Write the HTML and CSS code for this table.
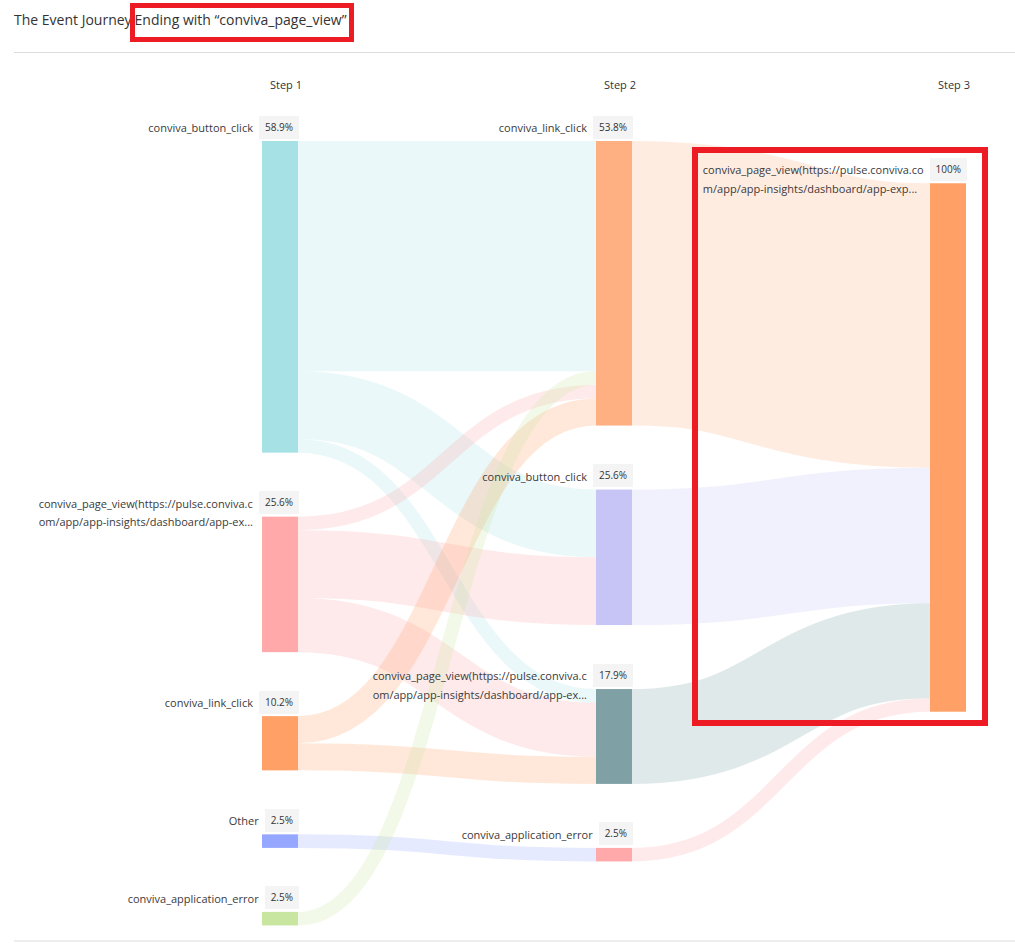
FILE: index.html
```html
<!DOCTYPE html>
<html lang="en">
<head>
<meta charset="utf-8">
<title>The Event Journey</title>
<link rel="stylesheet" href="styles.css">
</head>
<body>
<div class="header">
  <span class="title">The Event Journey</span><span class="title hl">Ending with “conviva_page_view”</span>
</div>
<div class="chart">
  <svg class="canvas" width="1015" height="887" viewBox="0 53 1015 887" xmlns="http://www.w3.org/2000/svg">
    <g class="links" fill="none">
      <path class="lk cyan" d="M298,256.18 C447,256.18 447,256.18 596,256.18" stroke-width="230.35"/>
      <path class="lk cyan" d="M298,405.23 C447,405.23 447,523.43 596,523.43" stroke-width="67.75"/>
      <path class="lk cyan" d="M298,445.88 C447,445.88 447,695.83 596,695.83" stroke-width="13.55"/>
      <path class="lk pink" d="M298,523.43 C447,523.43 447,391.68 596,391.68" stroke-width="13.55"/>
      <path class="lk pink" d="M298,564.08 C447,564.08 447,591.18 596,591.18" stroke-width="67.75"/>
      <path class="lk pink" d="M298,625.05 C447,625.05 447,729.7 596,729.7" stroke-width="54.2"/>
      <path class="lk orange" d="M298,729.7 C447,729.7 447,412 596,412" stroke-width="27.1"/>
      <path class="lk orange" d="M298,756.8 C447,756.8 447,770.35 596,770.35" stroke-width="27.1"/>
      <path class="lk blue" d="M298,841.13 C447,841.13 447,854.68 596,854.68" stroke-width="13.55"/>
      <path class="lk green" d="M298,918.68 C447,918.68 447,378.13 596,378.13" stroke-width="13.55"/>
      <path class="lk peach" d="M632,283.28 C781,283.28 781,325.53 930,325.53" stroke-width="284.55"/>
      <path class="lk lav" d="M632,557.3 C781,557.3 781,535.55 930,535.55" stroke-width="135.5"/>
      <path class="lk slate" d="M632,736.48 C781,736.48 781,650.73 930,650.73" stroke-width="94.85"/>
      <path class="lk pink" d="M632,854.68 C781,854.68 781,704.93 930,704.93" stroke-width="13.55"/>
    </g>
    <g class="nodes">
      <rect class="nd-cyan" x="262" y="141" width="36" height="311.65"/>
      <rect class="nd-pink" x="262" y="516.65" width="36" height="135.5"/>
      <rect class="nd-orange" x="262" y="716.15" width="36" height="54.2"/>
      <rect class="nd-blue" x="262" y="834.35" width="36" height="13.55"/>
      <rect class="nd-green" x="262" y="911.9" width="36" height="13.55"/>
      <rect class="nd-peach" x="596" y="141" width="36" height="284.55"/>
      <rect class="nd-lav" x="596" y="489.55" width="36" height="135.5"/>
      <rect class="nd-slate" x="596" y="689.05" width="36" height="94.85"/>
      <rect class="nd-pink" x="596" y="847.9" width="36" height="13.55"/>
      <rect class="nd-orange" x="930" y="183.25" width="36" height="528.45"/>
    </g>
  </svg>

  <div class="step" style="left:256px">Step 1</div>
  <div class="step" style="left:590px">Step 2</div>
  <div class="step" style="left:924px">Step 3</div>

  <div class="nl" style="top:62.5px;right:716px"><div class="lbl">conviva_button_click</div><div class="pct">58.9%</div></div>
  <div class="nl" style="top:438.15px;right:716px"><div class="lbl">conviva_page_view(https://pulse.conviva.c<br>om/app/app-insights/dashboard/app-ex...</div><div class="pct">25.6%</div></div>
  <div class="nl" style="top:637.65px;right:716px"><div class="lbl">conviva_link_click</div><div class="pct">10.2%</div></div>
  <div class="nl" style="top:755.85px;right:716px"><div class="lbl">Other</div><div class="pct">2.5%</div></div>
  <div class="nl" style="top:833.4px;right:716px"><div class="lbl">conviva_application_error</div><div class="pct">2.5%</div></div>

  <div class="nl" style="top:62.5px;right:382px"><div class="lbl">conviva_link_click</div><div class="pct">53.8%</div></div>
  <div class="nl" style="top:411.05px;right:382px"><div class="lbl">conviva_button_click</div><div class="pct">25.6%</div></div>
  <div class="nl" style="top:610.55px;right:382px"><div class="lbl">conviva_page_view(https://pulse.conviva.c<br>om/app/app-insights/dashboard/app-ex...</div><div class="pct">17.9%</div></div>
  <div class="nl" style="top:769.4px;right:382px"><div class="lbl">conviva_application_error</div><div class="pct">2.5%</div></div>

  <div class="nl" style="top:104.75px;right:48px"><div class="lbl">conviva_page_view(https://pulse.conviva.co<br>m/app/app-insights/dashboard/app-exp...</div><div class="pct">100%</div></div>

  <div class="focus"></div>
</div>
<div class="footer"></div>
</body>
</html>
```

FILE: styles.css
```css
* { box-sizing: border-box; }
html, body {
  margin: 0;
  padding: 0;
  background: #ffffff;
}
body {
  width: 1015px;
  font-family: "Open Sans", "Noto Sans", sans-serif;
  color: #333333;
  overflow: hidden;
}
.header {
  margin-left: 14px;
  height: 53px;
  padding-top: 3px;
  border-bottom: 1px solid #dddddd;
  display: flex;
  align-items: baseline;
}
.title {
  font-size: 14px;
  line-height: 19px;
  color: #333333;
  white-space: nowrap;
}
.hl {
  border: 5px solid #ed1c24;
  padding: 2px 2px 8px 0;
  margin-left: -2px;
}
.chart {
  position: relative;
  width: 1015px;
  height: 887px;
}
.canvas {
  display: block;
}
.lk { stroke-opacity: 0.24; }
.lk.cyan { stroke: #a6e1e6; }
.lk.pink { stroke: #ffa9ab; }
.lk.orange { stroke: #ffa066; }
.lk.blue { stroke: #96a7ff; }
.lk.green { stroke: #c8e6a0; }
.lk.peach { stroke: #ffb083; }
.lk.lav { stroke: #c6c5f5; }
.lk.slate { stroke: #7fa1a6; }
.nd-cyan { fill: #a6e1e6; }
.nd-pink { fill: #ffa9ab; }
.nd-orange { fill: #ffa066; }
.nd-blue { fill: #96a7ff; }
.nd-green { fill: #c8e6a0; }
.nd-peach { fill: #ffb083; }
.nd-lav { fill: #c6c5f5; }
.nd-slate { fill: #7fa1a6; }

.step {
  position: absolute;
  top: 24px;
  width: 60px;
  text-align: center;
  font-size: 11px;
  line-height: 15px;
  color: #333333;
}
.nl {
  position: absolute;
  display: flex;
  align-items: flex-start;
  gap: 6px;
}
.lbl {
  margin-top: 3.5px;
  font-size: 11px;
  line-height: 18.5px;
  color: #3a3a3a;
  white-space: nowrap;
}
.pct {
  background: #f4f4f4;
  font-size: 10px;
  line-height: 23px;
  height: 23px;
  padding: 0 6px;
  color: #333333;
  white-space: nowrap;
}
.focus {
  position: absolute;
  left: 692px;
  top: 94px;
  width: 296px;
  height: 579px;
  border: 6px solid #ed1c24;
}
.footer {
  margin-left: 14px;
  height: 3px;
  border-top: 2px solid #eeeeee;
}
```
